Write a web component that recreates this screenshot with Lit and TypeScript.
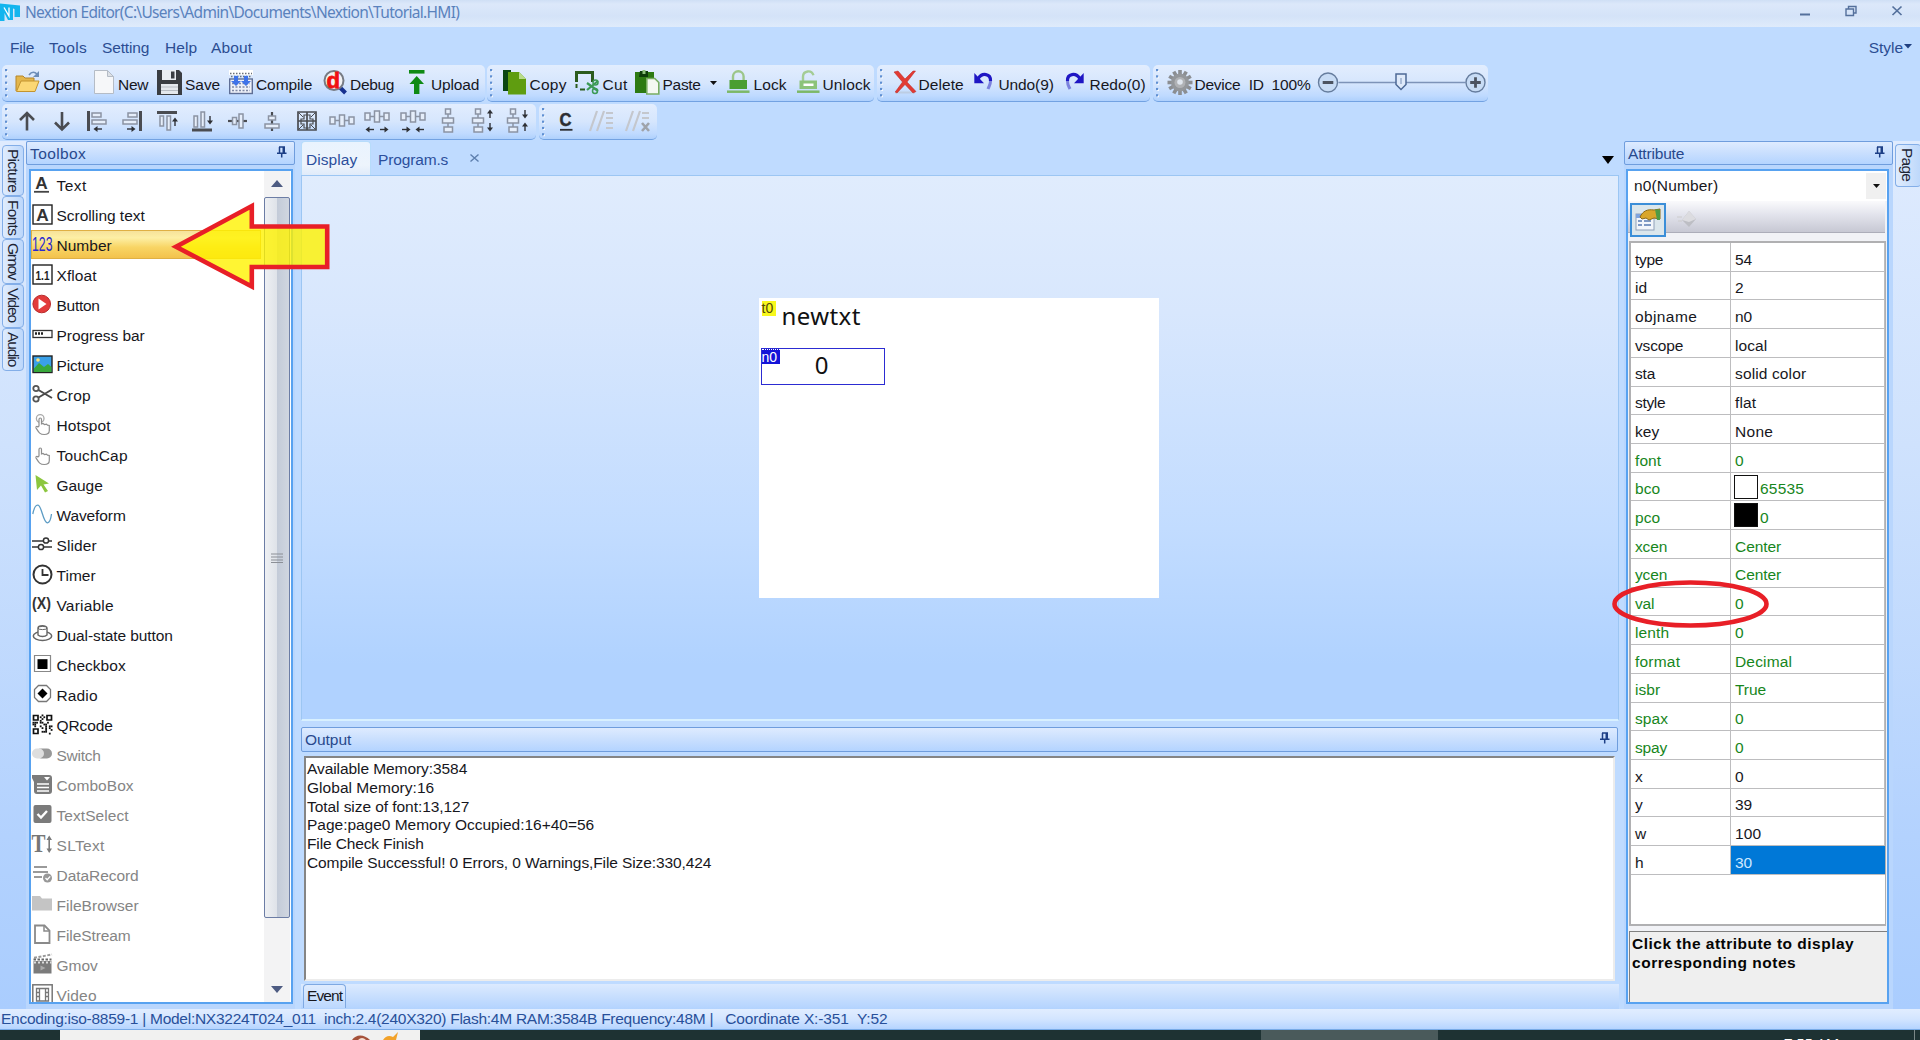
import { LitElement, html, svg, css, nothing } from "lit";
import { customElement, property } from "lit/decorators.js";
import { styleMap } from "lit/directives/style-map.js";
import { classMap } from "lit/directives/class-map.js";

/** Single-line label whose tracking is adjusted so that it spans `w` pixels. */
@customElement("fit-text")
class FitText extends LitElement {
  @property() text = "";
  @property({ type: Number }) w = 0;
  static styles = css`
    :host { display: inline-block; flex: none; white-space: pre; line-height: 1.2; }
    .t { display: inline-block; }
  `;
  render() {
    return html`<span class="t">${this.text}</span>`;
  }
  updated() {
    const el = this.renderRoot.querySelector(".t") as HTMLElement;
    el.style.letterSpacing = "0";
    const r = el.getBoundingClientRect();
    const natural = Math.max(r.width, r.height);
    if (this.w && this.text.length > 2) {
      el.style.letterSpacing = (this.w + 1.2 - natural) / this.text.length + "px";
    }
  }
}

const fit = (text: string, w: number) => html`<fit-text .text=${text} .w=${w}></fit-text>`;

const qrCells: [number, number][] = [];
for (let y = 0; y < 11; y++)
  for (let x = 0; x < 11; x++) {
    const corner = (x < 4 && y < 4) || (x > 6 && y < 4) || (x < 4 && y > 6);
    if (!corner && (x * 7 + y * 5 + ((x * y) % 3) * 2 + ((x ^ y) & 3)) % 5 < 2) qrCells.push([x, y]);
  }

const gearTeeth = [0, 30, 60, 90, 120, 150, 180, 210, 240, 270, 300, 330];

const tb: Record<string, unknown> = {
  open: svg`<path d="M1 21V6h7l2 2h9v5" fill="#e3b64c" stroke="#b5852a"/><path d="M1.5 21.5 6 11h18l-4 10.5z" fill="#fbd774" stroke="#c3942f"/><path d="M14 5c3-4 6-3 8-1" fill="none" stroke="#6d8db8" stroke-width="1.6"/><path d="M24 1v6h-6z" fill="#6d8db8"/>`,
  new: svg`<path d="M1.500 .5h13l6 6v17h-19z" fill="#f6f7f9" stroke="#b5bcc6"/><path d="M14.500 .5v6h6z" fill="#dde1e6" stroke="#b5bcc6"/>`,
  save: svg`<path d="M0 0h22l3 3v22H0z" fill="#3a3d42"/><path d="M5 0h14v10H5z" fill="#e9edf2"/><path d="M14 1.500h3.500v7H14z" fill="#3a3d42"/><path d="M4 14h17v10H4z" fill="#e4e8ed"/><path d="M4 17h17M4 20.500h17" stroke="#b7bcc3"/>`,
  compile: svg`<path d="M0 0h24v5H0z" fill="#fff"/><path d="M1 3.500h22M2 6.500h20" stroke="#6b7078" stroke-width="1.500" stroke-dasharray="1.500 1.500"/><rect x=".7" y="9" width="22.600" height="14.500" fill="#eef1f8" stroke="#5f6f96" stroke-width="1.400"/><path d="M3 13.500h18M3 17h18M3 20.500h18" stroke="#7f89a5" stroke-width="1.400" stroke-dasharray="2 1.500"/><path d="M5 6h4v5h3l-5 5-5-5h3zM15 6h4v5h3l-5 5-5-5h3z" fill="#3f73e8"/>`,
  debug: svg`<path d="m16.500 17 6 6" stroke="#17318f" stroke-width="4"/><circle cx="11" cy="10.500" r="9.500" fill="#f2f2f4" stroke="#777b84" stroke-width="2"/><text x="3.500" y="17.500" font-family="Liberation Sans" font-weight="bold" font-size="22" fill="#f01010" stroke="#f01010" stroke-width=".8">d</text>`,
  upload: svg`<path d="M0 0h15.500v3.600H0z" fill="#0e8a14"/><path d="M7.700 6 15 14h-4.600v10H5V14H.5z" fill="#0e8a14"/>`,
  copy: svg`<path d="M0 0h8v21H0z" fill="#0a4712"/><path d="M5 2h11l7 7v15.500H5z" fill="#5f9d10"/><path d="M16 2v7h7z" fill="#b9dc8b"/>`,
  cut: svg`<path d="M1.500 12V2.500h16V12" fill="none" stroke="#2c5c1d" stroke-width="3"/><path d="M1.500 14v4M5 19.500h5" stroke="#2c5c1d" stroke-width="2"/><path d="m12 13 11 8M12 20l11-9" stroke="#3c9a55" stroke-width="2.200"/><circle cx="20.500" cy="12.500" r="2.500" fill="none" stroke="#3c9a55" stroke-width="1.500"/><circle cx="20" cy="21" r="2.500" fill="none" stroke="#3c9a55" stroke-width="1.500"/>`,
  paste: svg`<path d="M0 2h19v21H0z" fill="#2d7a12"/><path d="M5 1h8v6H4z" fill="#0d3d0a"/><path d="M7.500 0h3v4h-3z" fill="#8cc07b"/><path d="M11.800 8.500h8l4 4v11.500h-12z" fill="#f4f8f2" stroke="#78ad62" stroke-width="1.600"/>`,
  lock: svg`<path d="M6 11V6.500a5.300 5.300 0 0 1 10.600 0V11" fill="none" stroke="#9cc68a" stroke-width="2.400"/><path d="M2.500 10h17.500v9H2.500z" fill="#4a9e31"/><path d="M0 21.700h22.500" stroke="#7db867" stroke-width="2.500"/>`,
  unlock: svg`<path d="M6 11V6.500a5.300 5.300 0 0 1 10.400-1.200" fill="none" stroke="#a4cc95" stroke-width="2.400"/><path d="M2.500 10.500h17.500v8.500H2.500z" fill="#8cc379"/><path d="M6.500 13.500h10v2.500h-10z" fill="#fff"/><path d="M0 21.700h22.500" stroke="#7db867" stroke-width="2.500"/>`,
  delete: svg`<path d="M1 22.500h20" stroke="#b9c4d2" stroke-width="2" opacity=".6"/><path d="M0 2 4 1l7 8 8-8h2.500l-8.500 11 9 9.500-3 1.500-8-8.500L3 23l-1.800-1L8.500 12z" fill="#e23b34" stroke="#b8211d" stroke-width=".5"/>`,
  undo: svg`<path d="M.3 3v10.300H10z" fill="#1f16c4"/><path d="M4 9C8 2 17 3.500 16.500 11" fill="none" stroke="#1f16c4" stroke-width="3.200"/><path d="M16.500 11c0 4-1.500 5-2.500 8" fill="none" stroke="#7b82dd" stroke-width="3"/>`,
  redo: svg`<path d="M18.700 3v10.300H9z" fill="#1f16c4"/><path d="M15 9C11 2 2 3.500 2.500 11" fill="none" stroke="#1f16c4" stroke-width="3.200"/><path d="M2.500 11c0 4 1 5 2.500 8" fill="none" stroke="#7b82dd" stroke-width="3"/>`,
  gear: svg`${gearTeeth.map((a) => svg`<rect x="10.200" y="0" width="3.600" height="6" fill="#8b8e92" transform="rotate(${a} 12 12.500)"/>`)}<circle cx="12" cy="12.500" r="9" fill="#94979b"/><circle cx="12" cy="12.500" r="5.500" fill="#b0b2b5"/><circle cx="12" cy="12" r="2.800" fill="#e0e6ee"/>`,
};

type Tool = [string, number, number, string, number, number];
// icon, icon x, label x, label, label width, end x
const groups: { x: number; w: number; tools: Tool[] }[] = [
  { x: 2, w: 483, tools: [
    ["open", 15, 43.500, "Open", 36, 93], ["new", 93, 118, "New", 29, 157], ["save", 157, 185, "Save", 34, 229],
    ["compile", 229, 256, "Compile", 55, 323], ["debug", 323, 350, "Debug", 43, 409], ["upload", 409, 431, "Upload", 47, 482]] },
  { x: 487, w: 387, tools: [
    ["copy", 503, 529.500, "Copy", 36, 574.500], ["cut", 574.500, 602.500, "Cut", 24, 635], ["paste", 635, 662.500, "Paste", 37, 727],
    ["lock", 727, 753.500, "Lock", 32, 797], ["unlock", 797, 822.500, "Unlock", 47, 872]] },
  { x: 877, w: 273, tools: [
    ["delete", 894, 918.500, "Delete", 44, 973.500], ["undo", 973.500, 998.500, "Undo(9)", 54, 1065], ["redo", 1065, 1089.500, "Redo(0)", 55, 1147]] },
  { x: 1153, w: 335, tools: [["gear", 1167.500, 1194.500, "Device  ID", 68, 1271.500]] },
];

const g = "#8b93a3";
const d = "#4a4c51";
const box = (x: number, y: number, w: number, h: number, c = g) =>
  svg`<rect x="${x}" y="${y}" width="${w}" height="${h}" fill="#e6eefa" stroke="${c}" stroke-width="1.500"/>`;
const chainH = svg`${box(1, 9, 5, 7)}${box(10.500, 7, 5, 11)}${box(20, 9, 5, 7)}<path d="M6 12.500h4.500M15.500 12.500H20" stroke="${g}" stroke-width="1.500"/>`;
const chainH2 = svg`${box(1, 5, 5, 7)}${box(10.500, 3, 5, 11)}${box(20, 5, 5, 7)}<path d="M6 8.500h4.500M15.500 8.500H20" stroke="${g}" stroke-width="1.500"/>`;
const chainV = (o: number) => svg`${box(10.500 + o, 1, 5, 5)}${box(7.500 + o, 10, 11, 5)}${box(9 + o, 19, 8.500, 5)}<path d="M${13 + o} 6v4M${13 + o} 15v4" stroke="${g}" stroke-width="1.500"/>`;
const ar = (x: number, y: number, rot: number) =>
  svg`<g transform="translate(${x} ${y}) rotate(${rot})"><path d="M-4 0h6" stroke="#2e3035" stroke-width="1.400"/><path d="M4.500 0 .5-3v6z" fill="#2e3035"/></g>`;

const alignIcons: unknown[] = [
  svg`<path d="M13 22.500V5M6 12l7-7 7 7" fill="none" stroke="${d}" stroke-width="2.600"/>`,
  svg`<path d="M13 4v17.500M6 14.500l7 7 7-7" fill="none" stroke="${d}" stroke-width="2.600"/>`,
  svg`<path d="M4.500 3v20" stroke="${d}" stroke-width="3"/>${box(8, 5, 9, 4)}${box(8, 12, 14, 4)}${ar(14, 21, 180)}`,
  svg`<path d="M21.500 3v20" stroke="${d}" stroke-width="3"/>${box(9, 5, 9, 4)}${box(4, 12, 14, 4)}${ar(12, 21, 0)}`,
  svg`<path d="M3 4.500h20" stroke="${d}" stroke-width="3"/>${box(6, 8, 3.500, 10)}${box(13, 8, 3.500, 14)}${ar(21, 14, -90)}`,
  svg`<path d="M3 22h20" stroke="${d}" stroke-width="3"/>${box(5, 8, 3.500, 11)}${box(12, 4, 3.500, 15)}${ar(21, 12, 90)}`,
  svg`<path d="M4 13h19" stroke="${d}" stroke-width="2.200"/>${box(8.500, 9.500, 4, 7)}${box(15, 6, 4, 14)}`,
  svg`<path d="M13 4v19" stroke="${d}" stroke-width="2.200"/>${box(9.500, 8, 7, 4)}${box(6, 16, 14, 4)}`,
  svg`<path d="M4 4h18v18H4zM13 4v18M4 13h18" fill="none" stroke="${d}" stroke-width="1.700"/><path d="M10 7h6v4h3v5h-3v4h-6v-4H7v-5h3z" fill="none" stroke="${d}" stroke-width="1.200"/><path d="m5 5 4 4M21 5l-4 4M5 21l4-4M21 21l-4-4" stroke="${d}"/>`,
  chainH,
  svg`${chainH2}${ar(6, 21.500, 180)}${ar(20, 21.500, 0)}`,
  svg`${chainH2}${ar(6, 21.500, 0)}${ar(20, 21.500, 180)}`,
  chainV(0),
  svg`${chainV(-5)}${ar(20, 6, -90)}${ar(20, 19, 90)}`,
  svg`${chainV(-5)}${ar(20, 6, 90)}${ar(20, 19, -90)}`,
];
const codeIcons: unknown[] = [
  svg`<text x="6.500" y="18" font-family="Liberation Sans" font-weight="bold" font-size="19" fill="#2c2e33" stroke="#2c2e33" stroke-width=".5" textLength="12" lengthAdjust="spacingAndGlyphs">C</text><path d="M7 21.800h12.500" stroke="#2c2e33" stroke-width="1.800"/>`,
  svg`<path d="M2 23 9 3M9 23l7-20M18 5h7M18 10h7M18 15h7M18 20h7" stroke="#c4c7cd" stroke-width="2.200"/>`,
  svg`<path d="M2 23 9 3M9 23l7-20M18 5h7M18 10h7" stroke="#c4c7cd" stroke-width="2.200"/><path d="m18 15 7 8M25 15l-7 8" stroke="#9fa3aa" stroke-width="2.600"/>`,
];

const G = "#7b7b7b";
const T = (x: number, y: number, s: number, t: string, c: string, w: number, b = "bold") =>
  svg`<text x="${x}" y="${y}" font-family="Liberation Sans" font-weight="${b}" font-size="${s}" fill="${c}" textLength="${w}" lengthAdjust="spacingAndGlyphs">${t}</text>`;
const hand = svg`<path d="M7 12V5.500c0-2 2.500-2 2.500 0V10l1.500-.5 1.500 1 2-.3 1 1 1.800.3v5c0 3-1.500 4-5 4-4.500 0-5.500-2-8.300-6.500-.5-1.500 1-2 2-1z" fill="#fff" stroke="#8e8e8e" stroke-width="1.200"/>`;

type Item = [string, number, unknown];
const toolbox: Item[] = [
  ["Text", 29, svg`${T(3.200, 14.500, 17, "A", "#333", 12.500)}<path d="M2 17.800h15" stroke="#444" stroke-width="1.800"/>`],
  ["Scrolling text", 87, svg`<rect x="1" y="1" width="19" height="19" fill="#fff" stroke="#222" stroke-width="1.400"/>${T(4.200, 16.500, 17, "A", "#333", 12.500)}`],
  ["Number", 54, svg`${T(0, 17, 19.500, "123", "#2a2ad0", 20.500, "normal")}`],
  ["Xfloat", 39, svg`<rect x="1" y="1" width="19" height="19" fill="#fff" stroke="#222" stroke-width="1.400"/>${T(3.500, 15.500, 13.500, "1.1", "#222", 14)}`],
  ["Button", 42, svg`<circle cx="9.700" cy="10" r="8.800" fill="#e23b3b" stroke="#b92a2a"/><path d="M6.500 4.500v11l8-5.500z" fill="#fff"/>`],
  ["Progress bar", 87, svg`<rect x="1" y="6.500" width="19" height="7" fill="#fff" stroke="#333" stroke-width="1.300"/><path d="M3 9.500h8.500" stroke="#222" stroke-width="2.400" stroke-dasharray="2 1"/>`],
  ["Picture", 46, svg`<rect x="1" y="2" width="19" height="16.500" fill="#3aa0e8" stroke="#222" stroke-width="1.400"/><path d="M2 14.500 7 9l5 4 4-3 3.500 3v5H2z" fill="#38a83b"/><circle cx="6" cy="6" r="1.800" fill="#ffe27a"/>`],
  ["Crop", 33, svg`<path d="m6.500 6 13.500 8M6.500 13.500 20 5.500" stroke="#4a4a4a" stroke-width="2"/><circle cx="4" cy="4.500" r="2.700" fill="#fff" stroke="#555" stroke-width="1.800"/><circle cx="4" cy="15" r="2.700" fill="#fff" stroke="#555" stroke-width="1.800"/>`],
  ["Hotspot", 53, svg`<circle cx="8.200" cy="4.500" r="3.800" fill="none" stroke="#aaa" stroke-width="1.300"/>${hand}`],
  ["TouchCap", 70, hand],
  ["Gauge", 45, svg`<path d="m3.500 1 13.500 8.500-5.500 1 4.500 6.500-3 1.500-4-7-4 4.500z" fill="#8cc63f"/>`],
  ["Waveform", 68, svg`<path d="M.8 10C2 4 4 .8 6 1.200 10 2 11 19 15.500 18.800 18 18.500 19 14 19.500 10" fill="none" stroke="#5d9cc4" stroke-width="1.300"/>`],
  ["Slider", 39, svg`<path d="M0 7h20M0 13h20" stroke="#333" stroke-width="1.600"/><circle cx="14" cy="6.500" r="2.600" fill="#fff" stroke="#333" stroke-width="1.500"/><circle cx="9" cy="13" r="2.600" fill="#fff" stroke="#333" stroke-width="1.500"/>`],
  ["Timer", 38, svg`<circle cx="10.500" cy="10.500" r="9" fill="#fff" stroke="#333" stroke-width="2"/><path d="M10.500 5v6h6" fill="none" stroke="#333" stroke-width="1.800"/>`],
  ["Variable", 56, svg`${T(0, 14.500, 17, "(X)", "#333", 19)}`],
  ["Dual-state button", 115, svg`<ellipse cx="10.500" cy="12" rx="9.200" ry="4.500" fill="#fff" stroke="#666" stroke-width="1.500"/><path d="M6 11V4c0-3 9-3 9 0v7c-2 2-7 2-9 0z" fill="#fff" stroke="#666" stroke-width="1.400"/><ellipse cx="10.500" cy="4" rx="4.500" ry="1.600" fill="none" stroke="#666"/>`],
  ["Checkbox", 68, svg`<path d="M2.500 17.500v-16h16v16z" fill="#fff" stroke="#888" stroke-width="1.200"/><path d="M5.500 5.200h10V15h-10z" fill="#000"/>`],
  ["Radio", 40, svg`<path d="M6.500 1.500h8l4 4v8l-4 4h-8l-4-4v-8z" fill="#fff" stroke="#777" stroke-width="1.300"/><path d="m10.500 4.500 5 5-5 5-5-5z" fill="#000"/>`],
  ["QRcode", 55, svg`${qrCells.map(([x, y]) => svg`<rect x="${0.500 + x * 1.820}" y="${0.500 + y * 1.820}" width="1.800" height="1.800" fill="#111"/>`)}<path d="M1.500 1.500h4.500v4.500H1.500zM15 1.500h4.500v4.500H15zM1.500 15h4.500v4.500H1.500z" fill="none" stroke="#111" stroke-width="1.700"/>`],
  ["Switch", 43, svg`<rect x="4" y="4.500" width="16" height="10" rx="5" fill="#989898"/><rect x="0" y="4.500" width="12" height="10" rx="5" fill="#dedede"/>`],
  ["ComboBox", 76, svg`<path d="M0 1h17q3 0 3 3v13q0 3-3 3H5q-3 0-3-3V8L0 4z" fill="${G}"/><path d="M12 3h6l-3 3.500z" fill="#fff"/><path d="M5 10h12M5 13.500h12M5 17h12" stroke="#fff" stroke-width="1.700"/>`],
  ["TextSelect", 71, svg`<rect x="1.500" y="1" width="18" height="18" rx="2" fill="${G}"/><path d="m5.500 10 3.500 3.500 6-6.500" fill="none" stroke="#fff" stroke-width="2.400"/>`],
  ["SLText", 47, svg`<text x="-.5" y="18" font-family="Liberation Serif" font-weight="bold" font-size="25" fill="#777" textLength="14" lengthAdjust="spacingAndGlyphs">T</text><path d="M17.200 3v14" stroke="${G}" stroke-width="1.600"/><path d="m14.500 6 2.700-4.500L20 6zM14.500 14.500l2.700 4.500 2.800-4.500z" fill="${G}"/>`],
  ["DataRecord", 81, svg`<path d="M2 3h13M1 8h15M2 13h8" stroke="#9a9a9a" stroke-width="2"/><circle cx="15.500" cy="14" r="4.500" fill="#989898"/><path d="m13.500 14 1.700 1.700 3-3.300" fill="none" stroke="#fff" stroke-width="1.300"/>`],
  ["FileBrowser", 81, svg`<path d="M0 2h8l2 2.500h10v12H0z" fill="#c4c4c4"/>`],
  ["FileStream", 73, svg`<path d="M3 1.500h9.500L17.500 6.500V19H3z" fill="#fff" stroke="#8a8a8a" stroke-width="1.800"/><path d="M12 2v5h5" fill="none" stroke="#8a8a8a" stroke-width="1.500"/>`],
  ["Gmov", 40, svg`<path d="M1.500 7h18v12.500h-18z" fill="${G}"/><path d="M2 3.800 20 .5" stroke="#999" stroke-width="2" stroke-dasharray="3 1.500"/><path d="M2 8.500h17.500" stroke="#ddd" stroke-width="2" stroke-dasharray="2 2"/><path d="M1.500 5.500h18" stroke="#666" stroke-width="2" stroke-dasharray="2.500 1.500"/><path d="m8.500 11.500 5 2.500-5 2.500z" fill="#aaa"/>`],
  ["Video", 39, svg`<rect x=".8" y=".8" width="19.400" height="22" fill="#fff" stroke="#777" stroke-width="1.500"/><path d="M4.500 4.500h12V17h-12zM7.500 4.500V17M13.500 4.500V17M4.500 8.500h3M4.500 12.500h3M13.500 8.500h3M13.500 12.500h3" fill="none" stroke="#777" stroke-width="1.300"/>`],
];

type Attr = [string, number, string, number, string?];
const attrs: Attr[] = [
  ["type", 27, "54", 17], ["id", 11, "2", 9], ["objname", 61, "n0", 17], ["vscope", 47, "local", 31],
  ["sta", 19, "solid color", 70], ["style", 29, "flat", 20], ["key", 23, "None", 37],
  ["font", 25, "0", 9], ["bco", 24, "65535", 43, "#fff"], ["pco", 24, "0", 9, "#000"],
  ["xcen", 31, "Center", 45], ["ycen", 31, "Center", 45], ["val", 18, "0", 9], ["lenth", 33, "0", 9],
  ["format", 44, "Decimal", 56], ["isbr", 24, "True", 30], ["spax", 32, "0", 9], ["spay", 31, "0", 9],
  ["x", 7, "0", 9], ["y", 7, "39", 17], ["w", 11, "100", 25], ["h", 9, "30", 17],
];

const output: [string, number][] = [
  ["Available Memory:3584", 159], ["Global Memory:16", 126], ["Total size of font:13,127", 161],
  ["Page:page0 Memory Occupied:16+40=56", 286], ["File Check Finish", 115.500],
  ["Compile Successful! 0 Errors, 0 Warnings,File Size:330,424", 403],
];

const sideTabs: [string, number, number][] = [
  ["Picture", 51, 42], ["Fonts", 43, 34], ["Gmov", 45, 35], ["Video", 44, 33], ["Audio", 43, 33],
];

const menus: [string, number, number][] = [
  ["File", 23, 39], ["Tools", 37, 53], ["Setting", 46, 63], ["Help", 31, 46], ["About", 40, 60],
];

const pin = html`<svg class="pin" width="10" height="12" viewBox="0 0 10 12"><path d="M2 1h6M2.500 1v6M0 7.300h9.500M4.700 7v4.500" fill="none" stroke="#1d3f86" stroke-width="1.500"/><path d="M5.500 1h2.500v6H5.500z" fill="#1d3f86"/></svg>`;
const grip = html`<svg class="grip" width="4" height="30" viewBox="0 0 4 30">${[0, 1, 2, 3, 4].map((i) => svg`<rect x="1" y="${2 + i * 6.300}" width="2" height="2" fill="#fff"/><rect x="0" y="${1 + i * 6.300}" width="2.200" height="2.200" fill="#5f8fd2"/>`)}</svg>`;

@customElement("app-root")
class AppRoot extends LitElement {
  static styles = css`
    :host { display: block; width: 1920px; height: 1040px; overflow: hidden; font: 15.500px "Liberation Sans", sans-serif; color: #17171d; }
    * { box-sizing: border-box; }
    svg { display: block; flex: none; overflow: visible; }
    .app { position: relative; display: flex; flex-direction: column; width: 1920px; height: 1040px; background: #bfdbff; overflow: hidden; }
    .title { display: flex; align-items: center; height: 27px; background: linear-gradient(#cfdff5, #dce8fa 15%, #d4e3f8 60%, #dfebfb); color: #5a82bd; font: 15.500px "Noto Sans", sans-serif; padding-bottom: 2px; }
    .title .logo { margin-right: 4px; margin-top: -2px; }
    .winbtns { display: flex; margin-left: auto; gap: 34px; padding-right: 17px; margin-top: -3px; }
    .menu { display: flex; height: 38px; padding: 4px 8px 0 10px; align-items: center; color: #2b4d92; }
    .mi { flex: none; }
    .style { display: flex; align-items: center; margin-left: auto; gap: 1px; }
    .style svg { margin-top: -3px; }
    .bar { display: flex; height: 39px; padding-left: 2px; align-items: flex-start; }
    .bar.second { height: 37px; }
    .group { display: flex; align-items: center; flex: none; height: 37px; border-radius: 5px; margin-right: 2px; background: linear-gradient(#e2edfe, #d6e6fd 50%, #bfdaff 85%, #aed0fc); border-bottom: 1.500px solid #72a2e2; }
    .bar.second .group { height: 36px; }
    .grip { margin-left: 3px; }
    .tool { display: flex; align-items: center; flex: none; height: 34px; }
    .ico { flex: none; height: 25px; margin-top: -2px; }
    .tool fit-text { margin-top: 4px; }
    .caret { margin: 0 0 1px 9px; }
    .cell { display: flex; justify-content: center; flex: none; width: 35.100px; padding-bottom: 2px; }
    .wide .cell { width: 35.500px; position: relative; left: 2px; }
    .main { display: flex; flex: none; height: 868px; }
    .side { width: 26px; flex: none; padding: 4px 0 0 2px; background: linear-gradient(#dfebfe, #cfe2fd 35%, #b3d2fe 80%, #aacdfe); }
    .stab { width: 22px; display: flex; align-items: center; padding-top: 3px; flex-direction: column; border: 1.500px solid #83aee8; border-radius: 4px; background: linear-gradient(90deg, #e0ecfd, #bcd7fb); color: #1c2433; }
    .stab fit-text { writing-mode: vertical-rl; }
    .side.right { width: 28px; padding: 3px 0 0 2px; }
    .side.right .stab { width: 26px; border-right: none; padding-right: 4px; }
    .panel { display: flex; flex-direction: column; flex: none; width: 269px; background: #b9d6fd; }
    .head { display: flex; flex: none; align-items: center; height: 24px; padding: 3px 7px 0 3px; border: 1.500px solid #6f9ddd; border-radius: 2px; background: linear-gradient(#deebff, #c9dffe 50%, #b4d4ff); color: #28498d; }
    .head fit-text { margin-top: -1px; }
    .head .pin { margin: -6px 0 0 auto; }
    .body { display: flex; height: 835px; margin: 4px 2px 0 3px; border: 2px solid #58a2f0; background: #fff; overflow: hidden; }
    .list { width: 232px; flex: none; overflow: hidden; }
    .item { display: flex; height: 30px; padding-left: 1px; }
    .item svg { margin-top: 3px; }
    .item fit-text { margin: 6px 0 0 3.500px; }
    .item.off { color: #858585; }
    .sel { height: 29px; margin: -1px 0 2px 0; width: 230px; border: 1px solid #dfb044; background: linear-gradient(#f6e29a, #fdefa5 25%, #f8d565 60%, #f3c24c); padding-left: 0; }
    .scroll { display: flex; flex-direction: column; align-items: center; width: 26px; margin-left: 1px; background: #f3f3f4; }
    .scroll .up { margin: 9px 0 10px; }
    .thumb { display: flex; align-items: center; justify-content: center; width: 26px; height: 721px; flex: none; border: 1.500px solid #6c7da5; border-radius: 2px; background: linear-gradient(90deg, #eef0f3, #dfe3e9 48%, #c3cbd8 52%, #d0d6e0); }
    .scroll .down { margin-top: 68px; }
    .center { display: flex; flex-direction: column; width: 1318px; margin: 0 5px 0 6px; flex: none; }
    .tabs { display: flex; height: 34px; flex: none; align-items: center; color: #2c4f9c; }
    .tab { display: flex; align-items: center; width: 70px; height: 34px; padding: 3px 0 0 4px; border: 1.500px solid #b7dcfb; border-bottom: none; border-radius: 4px 4px 0 0; background: linear-gradient(#e9f3fe, #edf4fc 70%, #e0ebfa); }
    .tab2 { margin: 5px 0 0 7px; }
    .x { margin: 0 0 0 22px; }
    .drop { margin: 4px 5px 0 auto; }
    .stage { display: flex; justify-content: center; height: 546px; flex: none; padding-top: 122px; border: 1.500px solid #9cc6f3; border-bottom: 2px solid #d8f0ff; background: linear-gradient(#e0ecfd, #d8e7fd 25%, #c2dcff 65%, #b0d2ff 90%); }
    .canvas { position: relative; width: 400px; height: 300px; margin-right: 3px; background: #fff; }
    .t0 { position: absolute; left: 3px; top: 3px; width: 14px; height: 15px; background: #f8f81c; font-size: 14px; line-height: 16px; color: #54480a; }
    .newtxt { position: absolute; left: 23px; top: 1px; font: 24px/34px "Noto Sans", sans-serif; color: #111; }
    .n0 { position: absolute; left: 2px; top: 50px; width: 124px; height: 37px; border: 1.500px solid #2c2cd2; display: flex; justify-content: center; font: 24px/31px "Noto Sans", sans-serif; color: #111; padding-right: 2px; }
    .tag { position: absolute; left: 0; top: 0; width: 18px; height: 15px; background: #1414d8; color: #fff; font: 14px/16px "Liberation Sans", sans-serif; border-top: 1px dotted #fff; }
    .tag fit-text, .t0 fit-text { display: block; line-height: 14px; }
    .outhead { margin: 6px 1px 0 0; height: 25px; }
    .outbox { height: 225px; flex: none; margin: 4px 4px 0 3px; padding: 2px 0 0 1px; border: 2px solid #858585; border-right-color: #ececec; border-bottom-color: #ececec; background: #fff; }
    .line { display: flex; align-items: center; height: 18.720px; }
    .events { display: flex; height: 26px; margin-top: 3px; padding-left: 2px; background: linear-gradient(#dceafe, #b3d3fe); }
    .event { width: 43px; height: 24px; border: 1.500px solid #7fa9e2; border-bottom: none; border-radius: 4px 4px 0 0; padding: 2px 0 0 3px; background: linear-gradient(#e0ecfe, #bcd8fe); }
    .attr .body { flex-direction: column; background: #f1f2f6; margin: 4px 4px 0 2px; }
    .combo { display: flex; flex: none; align-items: center; height: 30px; padding: 1px 1px 0 6px; background: #fff; }
    .combo .btn { display: flex; width: 20px; height: 26px; margin: -1px 0 0 auto; align-items: center; justify-content: center; background: #f0f0f0; }
    .tools { display: flex; align-items: flex-start; flex: none; height: 32px; background: linear-gradient(#fafafc, #e2e3ec 45%, #c7c8d3); border-bottom: 1px solid #acadb9; padding: 2px 0 0 2px; margin-right: 2px; }
    .cat { display: flex; flex: none; align-items: center; justify-content: center; width: 36px; height: 34px; border: 2px solid #3b8ed8; background: #dbe6ec; }
    .bolt { margin: 8px 0 0 11px; }
    .table { height: 685px; flex: none; margin: 8px 1px 0 1px; border: 2px solid #b0b0b2; border-right-width: 1px; background: #fff; }
    .row { display: grid; grid-template-columns: 99px 154.500px; width: 254px; height: 28.730px; border-bottom: 1.500px solid #bdbdbf; border-right: 1.500px solid #bdbdbf; }
    .row > div { display: flex; align-items: center; padding: 6px 0 0 4px; }
    .row .val { border-left: 1px solid #bdbdbf; }
    .green { color: #17861c; }
    .row .val.picked { background: #0078d7; color: #cfe8ff; }
    .sw { width: 24px; height: 24px; flex: none; margin: -6px 2px 0 -1px; border: 1.500px solid #111; }
    .note { flex: none; height: 72px; margin: 5px 0 0 1px; width: 259px; padding: 3px 0 0 2px; border: 1.500px solid #808080; background: #efefef; color: #050505; font: bold 15.500px "Liberation Sans", sans-serif; }
    .note .line { height: 19px; }
    .status { display: flex; flex: none; align-items: center; height: 21px; padding: 1px 0 0 1px; color: #28509a; background: linear-gradient(#e1edff, #d3e5ff 50%, #b5d4ff); border-bottom: 1.500px solid #78aae6; }
    .coord { margin-left: 12px; }
    .task { display: flex; flex: none; height: 10px; background: #1e3233; overflow: hidden; }
    .search { width: 360px; margin-left: 60px; background: #f1f1f0; }
    .search svg { margin-left: 290px; }
    .active { width: 177px; margin-left: 841px; background: #4a5a5b; }
    .clock { margin: 3px 0 0 346px; color: #fff; font: 15px "Noto Sans", sans-serif; }
    .edge { width: 1px; margin-left: 75px; background: #7b8787; }
    .over { position: absolute; left: 0; top: 0; pointer-events: none; }
  `;

  icon(c: unknown, w = 21, h = 21) {
    return html`<svg width=${w} height=${h} viewBox="0 0 ${w} ${h}">${c}</svg>`;
  }

  tool([name, x, tx, label, w, end]: Tool) {
    return html`<div class="tool" style=${styleMap({ width: end - x + "px" })}>
      <div class="ico" style=${styleMap({ width: tx - x + "px" })}>${this.icon(tb[name], 25, 25)}</div>
      ${fit(label, w)}
      ${name === "paste" ? html`<svg class="caret" width="7" height="4"><path d="M0 0h7L3.500 4z" fill="#111" /></svg>` : nothing}
    </div>`;
  }

  zoomBar() {
    return html`<div class="tool">${fit("100%", 38)}</div>
      <svg width="172" height="24" viewBox="1310.500 72 172 24">
        <path d="M1338 83.500h127" stroke="#7d93b8" stroke-width="1.400"/>
        <circle cx="1327.500" cy="83.500" r="9.500" fill="#c8dcf5" stroke="#667d9e" stroke-width="1.400"/>
        <path d="M1322.200 83.500h10.600" stroke="#4c5360" stroke-width="3"/>
        <circle cx="1475" cy="83.500" r="9.500" fill="#c8dcf5" stroke="#667d9e" stroke-width="1.400"/>
        <path d="M1469.700 83.500h10.600M1475 78.200v10.600" stroke="#4c5360" stroke-width="2.800"/>
        <path d="M1395.500 75h10v10.500l-5 5-5-5z" fill="#dfeafa" stroke="#4e6a96" stroke-width="1.500"/><path d="M1400.500 79v6" stroke="#7b92b8"/>
      </svg>`;
  }

  render() {
    return html`<div class="app">
      <div class="title">
        <svg class="logo" width="21" height="20" viewBox="0 0 21 20"><path d="M0 1.500 20 3.500V15H14.500V7L13 6.500V18H8L4.500 11v8H0z" fill="#13b5ee"/><path d="M4 5.500 9 14V5.500" fill="none" stroke="#fff" stroke-width="1.300"/></svg>
        ${fit("Nextion Editor(C:\\Users\\Admin\\Documents\\Nextion\\Tutorial.HMI)", 433)}
        <div class="winbtns">
          <svg width="12" height="12"><path d="M1 9.500h10" stroke="#54709c" stroke-width="2"/></svg>
          <svg width="12" height="12"><path d="M1 4h7.500v6.500H1zM3.500 4V1.500H11V8H8.500" fill="none" stroke="#54709c" stroke-width="1.400"/></svg>
          <svg width="12" height="12"><path d="m1.500 1.500 9 8.500M10.500 1.500l-9 8.500" stroke="#54709c" stroke-width="1.700"/></svg>
        </div>
      </div>
      <div class="menu">
        ${menus.map(([t, w, step]) => html`<div class="mi" style=${styleMap({ width: step + "px" })}>${fit(t, w)}</div>`)}
        <div class="style">${fit("Style", 33)}<svg width="8" height="5"><path d="M0 0h8L4 4.500z" fill="#1f3f80"/></svg></div>
      </div>
      <div class="bar">
        ${groups.map((gr, i) => html`<div class="group" style=${styleMap({ width: gr.w + "px", marginRight: (groups[i + 1] ? groups[i + 1].x - gr.x - gr.w : 0) + "px" })}>
          ${grip}<div style=${styleMap({ width: gr.tools[0][1] - gr.x - 7 + "px" })}></div>
          ${gr.tools.map((t) => this.tool(t))}
          ${i === 3 ? this.zoomBar() : nothing}
        </div>`)}
      </div>
      <div class="bar second">
        <div class="group" style=${styleMap({ width: "534px", marginRight: "3px" })}>${grip}${alignIcons.map((c) => html`<div class="cell">${this.icon(c, 26, 26)}</div>`)}</div>
        <div class="group wide" style=${styleMap({ width: "118px" })}>${grip}${codeIcons.map((c) => html`<div class="cell">${this.icon(c, 26, 26)}</div>`)}</div>
      </div>
      <div class="main">
        <div class="side">${sideTabs.map(([t, h, w]) => html`<div class="stab" style=${styleMap({ height: h + "px" })}>${fit(t, w)}</div>`)}</div>
        <div class="panel">
          <div class="head">${fit("Toolbox", 55)}${pin}</div>
          <div class="body">
            <div class="list">${toolbox.map(([t, w, ic], i) => html`<div class=${classMap({ item: true, sel: i === 2, off: i > 18 })}>${this.icon(ic)}${fit(t, w)}</div>`)}</div>
            <div class="scroll">
              <svg class="up" width="12" height="7"><path d="M0 7 6 0l6 7z" fill="#4d5b82"/></svg>
              <div class="thumb"><svg width="12" height="10"><path d="M0 1h12M0 4h12M0 7h12M0 9.500h12" stroke="#8b8f96" stroke-width="1.200"/></svg></div>
              <svg class="down" width="12" height="7"><path d="M0 0h12L6 7z" fill="#4d5b82"/></svg>
            </div>
          </div>
        </div>
        <div class="center">
          <div class="tabs">
            <div class="tab">${fit("Display", 50)}</div>
            <div class="tab2">${fit("Program.s", 69)}</div>
            <svg class="x" width="9" height="8"><path d="m.5.5 8 7M8.500.5l-8 7" stroke="#5d7fae" stroke-width="1.400"/></svg>
            <svg class="drop" width="12" height="8"><path d="M0 0h12L6 8z" fill="#000"/></svg>
          </div>
          <div class="stage">
            <div class="canvas">
              <div class="t0">${fit("t0", 12)}</div>
              <div class="newtxt">${fit("newtxt", 78)}</div>
              <div class="n0"><div class="tag">${fit("n0", 16)}</div><span>0</span></div>
            </div>
          </div>
          <div class="head outhead">${fit("Output", 45)}${pin}</div>
          <div class="outbox">${output.map(([t, w]) => html`<div class="line">${fit(t, w)}</div>`)}</div>
          <div class="events"><div class="event">${fit("Event", 34)}</div></div>
        </div>
        <div class="panel attr">
          <div class="head">${fit("Attribute", 55)}${pin}</div>
          <div class="body">
            <div class="combo">${fit("n0(Number)", 83)}<div class="btn"><svg width="7" height="4"><path d="M0 0h7L3.500 4z" fill="#111"/></svg></div></div>
            <div class="tools">
              <div class="cat"><svg width="26" height="24" viewBox="0 0 26 24"><rect x="1" y="6" width="18" height="16" fill="#f3f6fb" stroke="#8fa0b8"/><path d="M1 6h18v4H1z" fill="#7fa4df"/><path d="M3 13h4M3 17h4M9 13h7M9 17h7" stroke="#7f99c4" stroke-width="2"/><path d="M5 9c3-6 7-8 14-7l6-1v10l-6-1-5 2-3-2-4 1z" fill="#d9a62a" stroke="#8b6a1a"/><path d="M20 1.500h5V12h-3z" fill="#4f9b46"/></svg></div>
              <svg class="bolt" width="20" height="18"><path d="M12 0 19 8l-7 8-7-7z" fill="#bdbec4"/><path d="M12 0 19 8l-7 3-7-2z" fill="#dcdce0"/><path d="M0 6h5M1 10h4" stroke="#ccc"/></svg>
            </div>
            <div class="table">
              ${attrs.map(([k, kw, v, vw, sw], i) => html`<div class=${classMap({ row: true, green: i >= 7 && i <= 17 })}>
                <div>${fit(k, kw)}</div>
                <div class=${classMap({ val: true, picked: i === 21 })}>${sw ? html`<div class="sw" style=${styleMap({ background: sw })}></div>` : nothing}${fit(v, vw)}</div>
              </div>`)}
            </div>
            <div class="note">
              <div class="line">${fit("Click the attribute to display", 221)}</div>
              <div class="line">${fit("corresponding notes", 163)}</div>
            </div>
          </div>
        </div>
        <div class="side right"><div class="stab" style=${styleMap({ height: "43px" })}>${fit("Page", 32)}</div></div>
      </div>
      <div class="status">${fit("Encoding:iso-8859-1 | Model:NX3224T024_011  inch:2.4(240X320) Flash:4M RAM:3584B Frequency:48M |", 711)}<div class="coord">${fit("Coordinate X:-351  Y:52", 161)}</div></div>
      <div class="task">
        <div class="search"><svg width="60" height="10"><path d="M2 10C6 4 14 4 20 10" fill="#a5523a"/><path d="M8 10q4-4 8 0z" fill="#f6ddd0"/><path d="M33 10q4-6 10-3l5-5-2 8z" fill="#f2a229"/></svg></div>
        <div class="active"></div>
        <div class="clock">${fit("7:55 AM", 54)}</div>
        <div class="edge"></div>
      </div>
      <svg class="over" width="1920" height="1040">
        <path d="M176 246.700 251.800 206v20.500h75.400V267h-75.400v19.500z" fill="#fff200" fill-opacity=".8" stroke="#e81f27" stroke-width="4.600"/>
        <ellipse cx="1690.500" cy="604" rx="76" ry="21.500" fill="none" stroke="#e81f27" stroke-width="4.600"/>
      </svg>
    </div>`;
  }
}
